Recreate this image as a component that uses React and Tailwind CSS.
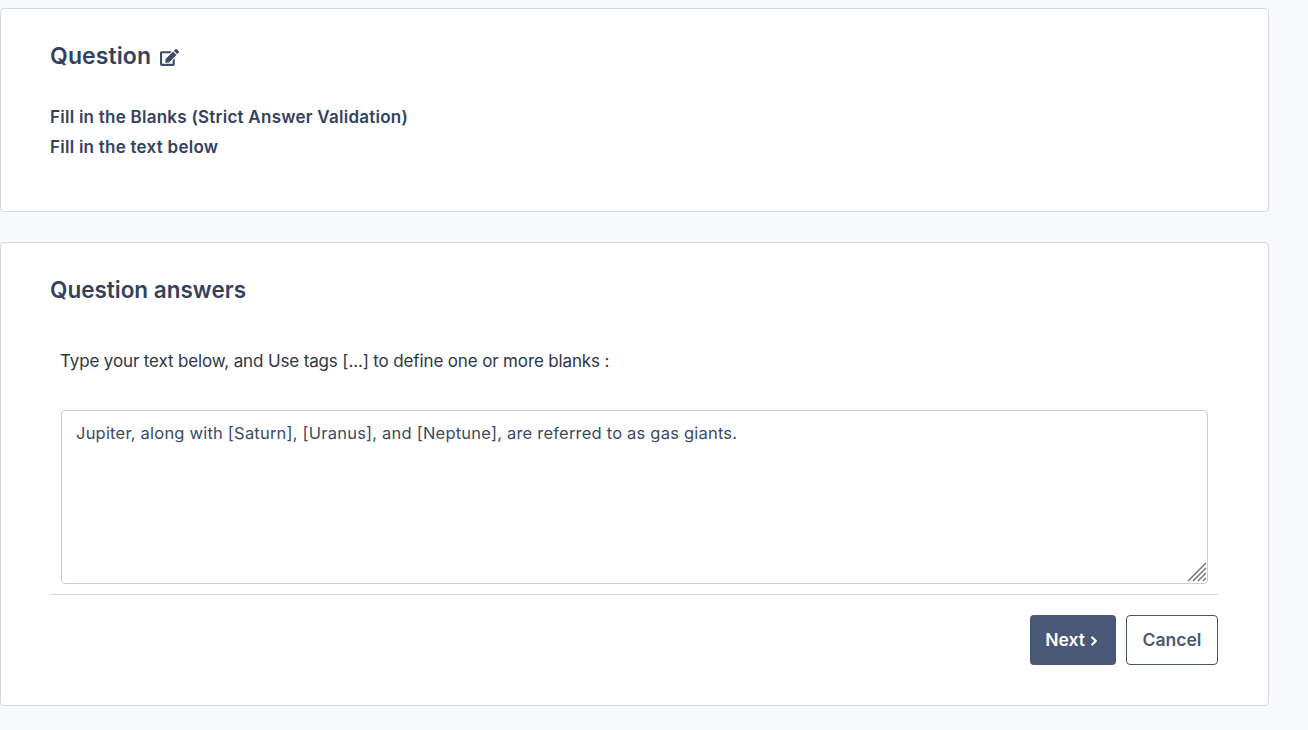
import React from "react";
import { FaEdit } from "react-icons/fa";
import { ChevronRight } from "lucide-react";

export default function App() {
  return (
    <div className="h-[730px] overflow-hidden bg-[#f8f9fb] pt-2 pr-[39px] font-['Inter',sans-serif] text-[#344260]">
      <section className="h-[204px] rounded border border-[#d5d7dc] bg-white pt-[30px] pl-[50px]">
        <h2 className="-ml-px flex h-[34px] items-center gap-[9px] text-[23px] font-semibold leading-[34px] tracking-[0.1px]">
          Question
          <FaEdit className="mt-[2px] text-[#3d4a68]" size={19} />
        </h2>
        <div className="mt-[29px] -ml-px text-[17px] leading-[30px] font-semibold tracking-[0.25px] text-[#344260]">
          <p>Fill in the Blanks (Strict Answer Validation)</p>
          <p>Fill in the text below</p>
        </div>
      </section>
      <section className="mt-[30px] h-[464px] rounded border border-[#d5d7dc] bg-white pt-[30px] pr-[50px] pl-[50px]">
        <h2 className="-ml-px h-[34px] text-[22.5px] font-semibold leading-[34px]">Question answers</h2>
        <p className="mt-[37px] ml-[9px] text-[17px] leading-[34px] tracking-[-0.14px] text-[#2f3645]">
          Type your text below, and Use tags [...] to define one or more blanks :
        </p>
        <div className="relative mx-[10px] mt-[32px]">
          <textarea
            className="block h-[174px] w-full resize-none rounded border border-[#ccced3] bg-white px-[14px] py-[10px] text-[16.5px] leading-[24px] tracking-[0.21px] text-[#3c4a66] outline-none"
            defaultValue="Jupiter, along with [Saturn], [Uranus], and [Neptune], are referred to as gas giants."
          />
          <svg className="pointer-events-none absolute right-[1px] bottom-[2px]" width="20" height="20" viewBox="0 0 20 20" fill="none" stroke="#6b6f76" strokeWidth="1.4">
            <path d="M1 19 L19 1 M6 19 L19 6 M11 19 L19 11 M16 19 L19 16" />
          </svg>
        </div>
        <div className="mt-[10px] flex justify-end gap-[10px] border-t border-[#d5d7dc] pt-[20px]">
          <button className="flex h-[50px] w-[86px] items-center justify-center gap-[2px] rounded bg-[#4a5878] pt-px text-[17.5px] font-semibold text-white">
            Next
            <ChevronRight size={14} strokeWidth={4} className="mt-px" />
          </button>
          <button className="h-[50px] w-[92px] rounded border border-[#4a5568] bg-white pt-px text-[17.5px] font-semibold text-[#4a5878]">
            Cancel
          </button>
        </div>
      </section>
    </div>
  );
}
